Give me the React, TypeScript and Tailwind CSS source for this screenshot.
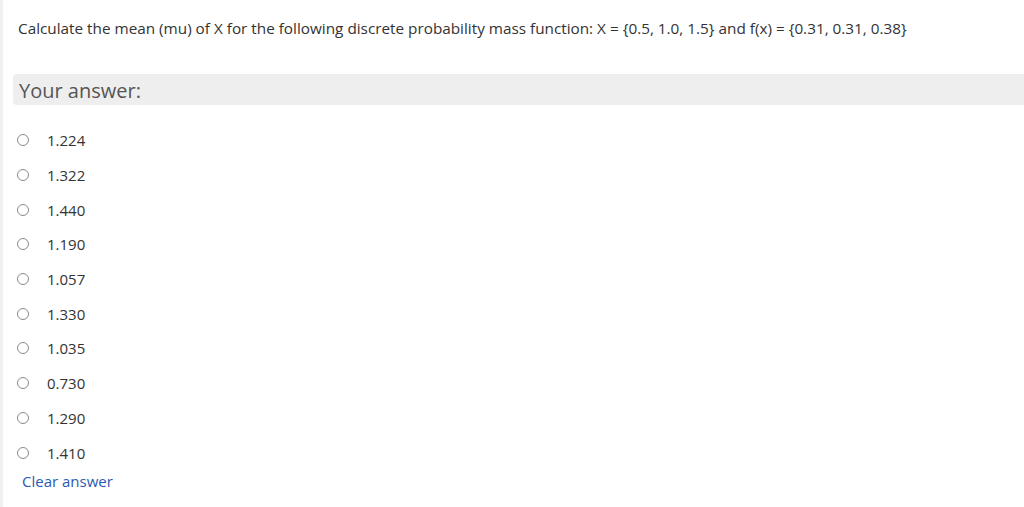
const options = ['1.224', '1.322', '1.440', '1.190', '1.057', '1.330', '1.035', '0.730', '1.290', '1.410'];

const RadioOption = ({ label }: { label: string }) => (
  <label className="flex h-[34.7px] items-center pl-[4px]">
    <span className="inline-block h-[12px] w-[12px] rounded-full border border-[#8a8a8a] bg-white" />
    <span className="ml-[18px] text-[15px] leading-[20px] text-[#333333]">{label}</span>
  </label>
);

export default function App() {
  return (
    <div
      className="min-h-[507px] w-[1024px] border-l-[3px] border-[#f0f0f0] bg-white pl-[10px]"
      style={{ fontFamily: '"Open Sans", "Liberation Sans", sans-serif' }}
    >
      <p className="pl-[5px] pt-[18px] text-[15.3px] leading-[20px] text-[#333333]">
        Calculate the mean (mu) of X for the following discrete probability mass function: X = {'{'}0.5, 1.0, 1.5{'}'} and f(x) = {'{'}0.31, 0.31, 0.38{'}'}
      </p>

      <div className="mt-[36px] flex h-[31px] items-center rounded-l-[4px] bg-[#eeeeee] pl-[6px] pt-[3px]">
        <span className="text-[20px] leading-[26px] text-[#555555]">Your answer:</span>
      </div>

      <div className="mt-[18px]">
        {options.map((opt) => (
          <RadioOption key={opt} label={opt} />
        ))}
      </div>

      <button type="button" className="mt-[1px] block pl-[9px] text-[15px] leading-[20px] text-[#2a5bb5]">
        Clear answer
      </button>
    </div>
  );
}
